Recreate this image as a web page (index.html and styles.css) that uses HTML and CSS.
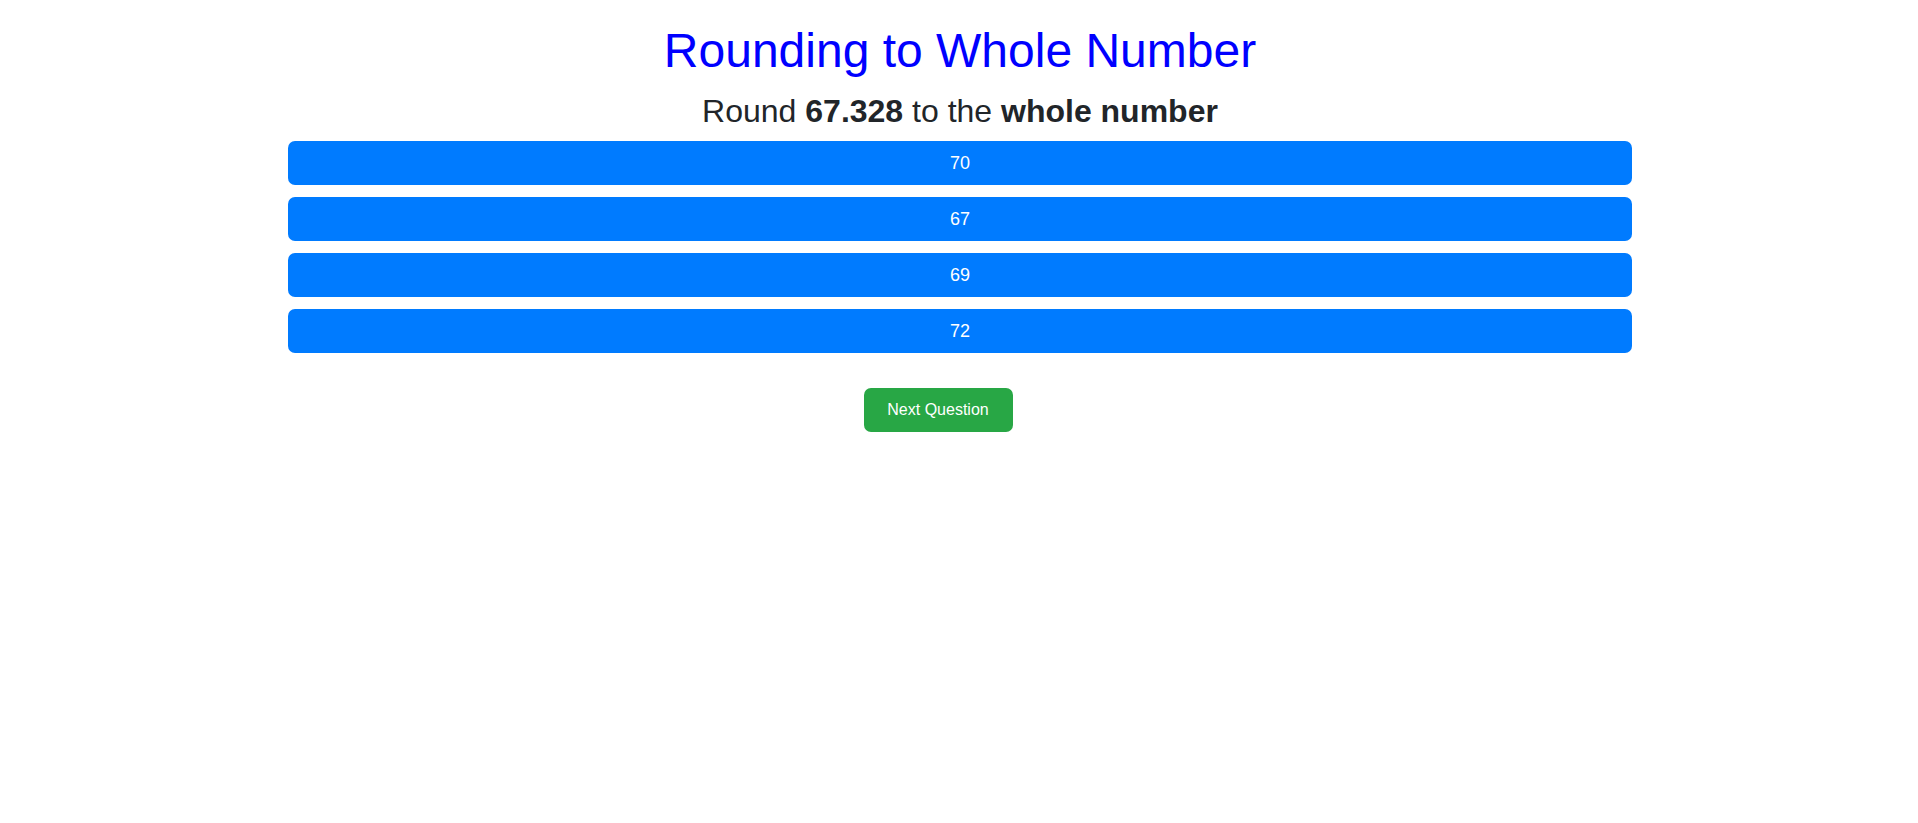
FILE: index.html
```html
<!DOCTYPE html>
<html>
<head>
<meta charset="utf-8">
<link rel="stylesheet" href="styles.css">
</head>
<body>
<main class="quiz">
  <h1 class="title">Rounding to Whole Number</h1>
  <h2 class="question">Round <b>67.328</b> to the <b>whole number</b></h2>
  <div class="options">
    <button class="option">70</button>
    <button class="option">67</button>
    <button class="option">69</button>
    <button class="option">72</button>
  </div>
  <div class="actions">
    <button class="next">Next Question</button>
  </div>
</main>
</body>
</html>
```
FILE: styles.css
```css
html, body {
  margin: 0;
  padding: 0;
  background: #ffffff;
}
body {
  font-family: "Liberation Sans", Arial, sans-serif;
  color: #212529;
  padding-left: 2px;
}
.quiz {
  width: 1344px;
  max-width: 100%;
  margin: 0 auto;
  padding-top: 24px;
  display: flex;
  flex-direction: column;
  align-items: stretch;
}
.title {
  margin: 0;
  font-size: 48px;
  font-weight: normal;
  line-height: 54px;
  color: #0000ff;
  text-align: center;
}
.question {
  margin: 15px 0 0;
  font-size: 32px;
  font-weight: normal;
  line-height: 36px;
  text-align: center;
  color: #212529;
}
.question b {
  font-weight: bold;
}
.options {
  margin-top: 12px;
  display: flex;
  flex-direction: column;
  gap: 12px;
}
.option {
  height: 44px;
  border: none;
  border-radius: 7px;
  background: #007bff;
  color: #ffffff;
  font-family: "Liberation Sans", Arial, sans-serif;
  font-size: 18px;
  padding: 0;
  cursor: pointer;
}
.actions {
  margin-top: 35px;
  display: flex;
  justify-content: center;
  padding-right: 44px;
}
.next {
  width: 149px;
  height: 44px;
  border: none;
  border-radius: 7px;
  background: #28a745;
  color: #ffffff;
  font-family: "Liberation Sans", Arial, sans-serif;
  font-size: 16px;
  padding: 0;
  cursor: pointer;
}
```
